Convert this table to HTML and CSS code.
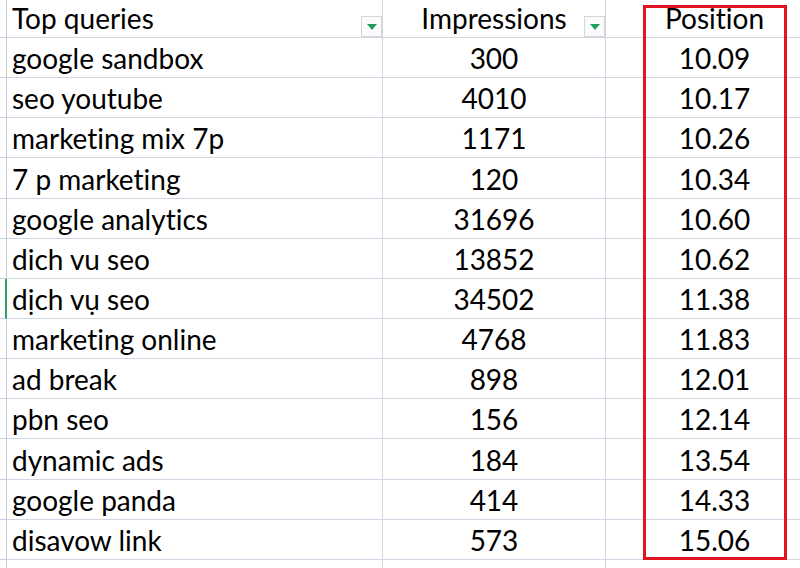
FILE: index.html
```html
<!DOCTYPE html>
<html>
<head>
<meta charset="utf-8">
<link rel="stylesheet" href="styles.css">
</head>
<body>
<div class="sheet">
  <div class="grid">
    <div class="rh head"></div>
    <div class="c txt head">Top queries<span class="dd"><span class="tri"></span></span></div>
    <div class="c num head">Impressions<span class="dd"><span class="tri"></span></span></div>
    <div class="c num head pos">Position</div>

    <div class="rh"></div><div class="c txt">google sandbox</div><div class="c num">300</div><div class="c num">10.09</div>
    <div class="rh"></div><div class="c txt">seo youtube</div><div class="c num">4010</div><div class="c num">10.17</div>
    <div class="rh"></div><div class="c txt">marketing mix 7p</div><div class="c num">1171</div><div class="c num">10.26</div>
    <div class="rh"></div><div class="c txt">7 p marketing</div><div class="c num">120</div><div class="c num">10.34</div>
    <div class="rh"></div><div class="c txt">google analytics</div><div class="c num">31696</div><div class="c num">10.60</div>
    <div class="rh"></div><div class="c txt">dich vu seo</div><div class="c num">13852</div><div class="c num">10.62</div>
    <div class="rh active"></div><div class="c txt">dịch vụ seo</div><div class="c num">34502</div><div class="c num">11.38</div>
    <div class="rh"></div><div class="c txt">marketing online</div><div class="c num">4768</div><div class="c num">11.83</div>
    <div class="rh"></div><div class="c txt">ad break</div><div class="c num">898</div><div class="c num">12.01</div>
    <div class="rh"></div><div class="c txt">pbn seo</div><div class="c num">156</div><div class="c num">12.14</div>
    <div class="rh"></div><div class="c txt">dynamic ads</div><div class="c num">184</div><div class="c num">13.54</div>
    <div class="rh"></div><div class="c txt">google panda</div><div class="c num">414</div><div class="c num">14.33</div>
    <div class="rh"></div><div class="c txt">disavow link</div><div class="c num">573</div><div class="c num">15.06</div>
    <div class="rh"></div><div class="c txt"></div><div class="c num"></div><div class="c num"></div>
  </div>
  <div class="highlight"></div>
</div>
</body>
</html>
```

FILE: styles.css
```css
html, body {
  margin: 0;
  padding: 0;
  background: #ffffff;
  overflow: hidden;
}
body {
  width: 800px;
  height: 568px;
}
.sheet {
  position: relative;
  width: 800px;
  height: 568px;
  overflow: hidden;
  font-family: Lato, "Open Sans", sans-serif;
  font-size: 28px;
  font-variant-ligatures: none;
  color: #000000;
}
.grid {
  display: grid;
  grid-template-columns: 7px 376px 223px 218px;
  grid-template-rows: 38px;
  grid-auto-rows: 40.15px;
}
.rh {
  box-sizing: border-box;
  border-right: 1px solid #c9cbd9;
  border-bottom: 1px solid #c9cbd9;
  background: #ffffff;
}
.rh.active {
  border-right: 2px solid #2f9e5e;
}
.c {
  box-sizing: border-box;
  border-right: 1px solid #d4d5e3;
  border-bottom: 1px solid #d4d5e3;
  display: flex;
  align-items: flex-end;
  line-height: 30px;
  padding-bottom: 4px;
  white-space: nowrap;
  position: relative;
}
.txt {
  padding-left: 5px;
}
.num {
  justify-content: center;
}
.dd {
  position: absolute;
  right: 0;
  bottom: 0;
  width: 21px;
  height: 21px;
  box-sizing: border-box;
  border: 1px solid #d6d6d6;
  background: #fbfbfb;
  display: flex;
  align-items: center;
  justify-content: center;
}
.tri {
  width: 0;
  height: 0;
  border-left: 5px solid transparent;
  border-right: 5px solid transparent;
  border-top: 6px solid #1e9e63;
  margin-top: 1px;
}
.highlight {
  position: absolute;
  left: 643px;
  top: 5px;
  width: 144px;
  height: 555px;
  box-sizing: border-box;
  border: 3px solid #e1141f;
}
```
